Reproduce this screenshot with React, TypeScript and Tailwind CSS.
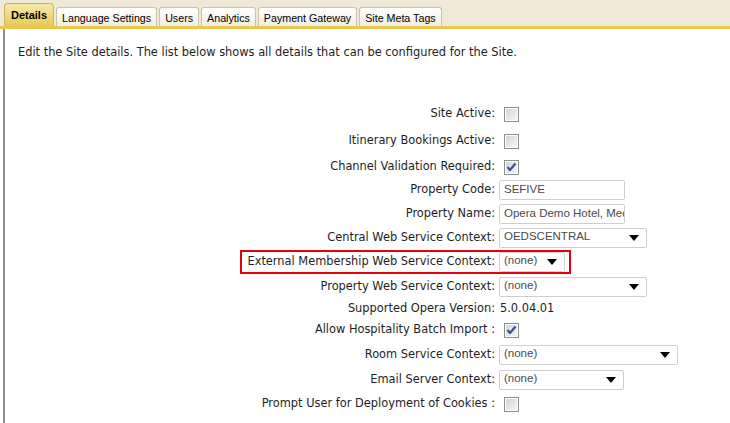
import React from 'react';

const labelFont = "font-['DejaVu_Sans',Verdana,sans-serif] text-[11.4px] text-[#1e1e1e]";
const ctlFont = "font-['Liberation_Sans',Arial,sans-serif] text-[11.5px] text-[#4a4a4a]";

function Checkbox({ checked = false }: { checked?: boolean }) {
  return (
    <div className="ml-[5px] w-[15px] h-[15px] border border-[#8c8d8d] p-[1px] bg-white">
      <div className="w-full h-full bg-gradient-to-br from-[#d4d4d4] to-[#f6f6f6] flex items-center justify-center">
        {checked && (
          <svg width="11" height="10" viewBox="0 0 11 10">
            <path d="M1.5 5 L4 8 L9.5 1.5" fill="none" stroke="#3a4fa3" strokeWidth="2.2" strokeLinejoin="round" />
          </svg>
        )}
      </div>
    </div>
  );
}

function TextBox({ value, width }: { value: string; width: string }) {
  return (
    <div className={`${width} h-[20px] border border-[#cfcfcf] rounded-[2px] bg-white pl-[4px] flex items-center overflow-hidden whitespace-nowrap ${ctlFont} text-[#3a3a3a]`}>
      <span className="-mt-[1px]">{value}</span>
    </div>
  );
}

function Select({ value, width }: { value: string; width: string }) {
  return (
    <div className={`${width} h-[20px] border border-[#cfcfcf] rounded-[2px] bg-white pl-[4px] pr-[7px] flex items-center justify-between ${ctlFont}`}>
      <span className="leading-none -mt-[3px]">{value}</span>
      <svg width="10" height="6" viewBox="0 0 10 6">
        <path d="M0 0 H10 L5 6 Z" fill="#000" />
      </svg>
    </div>
  );
}

function Row({ label, mt, children, highlight = false }: { label: string; mt: string; children: React.ReactNode; highlight?: boolean }) {
  return (
    <div className={`relative flex items-center h-[20px] ${mt}`}>
      {highlight && (
        <div className="absolute left-[235px] -top-[2px] w-[331px] h-[24px] border-2 border-[#e4000f] pointer-events-none" />
      )}
      <div className={`w-[490px] text-right whitespace-nowrap ${labelFont}`}>{label}</div>
      <div className="ml-[4px] flex items-center">{children}</div>
    </div>
  );
}

const tabs = ['Language Settings', 'Users', 'Analytics', 'Payment Gateway', 'Site Meta Tags'];

export default function App() {
  return (
    <div className="w-[730px] h-[423px] overflow-hidden bg-white flex flex-col">
      {/* Tab strip */}
      <div className="h-[26px] bg-[#f0e9d6] flex items-end pl-[4px] gap-[2px] shrink-0">
        <div className="h-[23px] w-[50px] rounded-t-[4px] border border-b-0 border-[#cbb35c] bg-gradient-to-b from-[#f7e9a8] to-[#e8c94e] flex items-center justify-center font-['Liberation_Sans',Arial,sans-serif] text-[11px] font-bold text-black pt-[1px]">
          Details
        </div>
        {tabs.map((t) => (
          <div
            key={t}
            className="h-[19px] px-[5px] rounded-t-[3px] border border-b-0 border-[#c9c2ad] bg-gradient-to-b from-white to-[#f3eedd] flex items-center font-['Liberation_Sans',Arial,sans-serif] text-[10.7px] text-black whitespace-nowrap pt-[2px]"
          >
            {t}
          </div>
        ))}
      </div>
      <div className="h-[3px] bg-[#e5c84d] shrink-0" />

      {/* Content */}
      <div className="flex-1 pl-[3px]">
        <div className="h-full border-l-2 border-[#8e8e8e] flex flex-col">
          <p className={`pl-[13px] pt-[16px] leading-[14px] ${labelFont}`}>
            Edit the Site details. The list below shows all details that can be configured for the Site.
          </p>
          <div className="mt-[45px] flex flex-col">
            <Row label="Site Active:" mt="mt-0"><Checkbox /></Row>
            <Row label="Itinerary Bookings Active:" mt="mt-[7px]"><Checkbox /></Row>
            <Row label="Channel Validation Required:" mt="mt-[6px]"><Checkbox checked /></Row>
            <Row label="Property Code:" mt="mt-[3px]"><TextBox value="SEFIVE" width="w-[126px]" /></Row>
            <Row label="Property Name:" mt="mt-[4px]"><TextBox value="Opera Demo Hotel, Medi" width="w-[126px]" /></Row>
            <Row label="Central Web Service Context:" mt="mt-[4px]"><Select value="OEDSCENTRAL" width="w-[148px]" /></Row>
            <Row label="External Membership Web Service Context:" mt="mt-[4px]" highlight><Select value="(none)" width="w-[66px]" /></Row>
            <Row label="Property Web Service Context:" mt="mt-[5px]"><Select value="(none)" width="w-[148px]" /></Row>
            <Row label="Supported Opera Version:" mt="mt-[2px]">
              <span className={`ml-[1px] ${labelFont}`}>5.0.04.01</span>
            </Row>
            <Row label="Allow Hospitality Batch Import :" mt="mt-[1px]"><Checkbox checked /></Row>
            <Row label="Room Service Context:" mt="mt-[5px]"><Select value="(none)" width="w-[179px]" /></Row>
            <Row label="Email Server Context:" mt="mt-[5px]"><Select value="(none)" width="w-[125px]" /></Row>
            <Row label="Prompt User for Deployment of Cookies :" mt="mt-[4px]"><Checkbox /></Row>
          </div>
        </div>
      </div>
    </div>
  );
}
